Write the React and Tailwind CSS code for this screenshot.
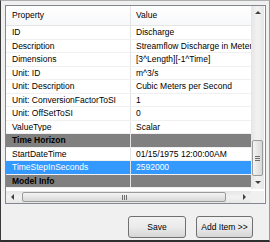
const rows = [
  { k: "ID", v: "Discharge" },
  { k: "Description", v: "Streamflow Discharge in Meters per Second" },
  { k: "Dimensions", v: "[3^Length][-1^Time]" },
  { k: "Unit: ID", v: "m^3/s" },
  { k: "Unit: Description", v: "Cubic Meters per Second" },
  { k: "Unit: ConversionFactorToSI", v: "1" },
  { k: "Unit: OffSetToSI", v: "0" },
  { k: "ValueType", v: "Scalar" },
  { k: "Time Horizon", cat: true },
  { k: "StartDateTime", v: "01/15/1975 12:00:00AM" },
  { k: "TimeStepInSeconds", v: "2592000", sel: true },
  { k: "Model Info", cat: true },
];

function Row({ row }) {
  let bg = "bg-white text-black";
  if (row.cat) bg = "bg-[#808080] text-black font-bold";
  if (row.sel) bg = "bg-[#3399ff] text-white";
  return (
    <div className={`flex h-[13.5px] items-center border-b border-[#f0f0f0] ${bg}`}>
      <div className="w-[124px] shrink-0 truncate pl-[6px] leading-none">{row.k}</div>
      <div className="h-full w-px shrink-0 bg-[#e3e3e3]" />
      <div className="whitespace-nowrap pl-[5px] leading-none">{row.v}</div>
    </div>
  );
}

function Arrow({ dir }) {
  const pts = {
    up: "1,4 4,1 7,4",
    down: "1,1 4,4 7,1",
    left: "4,1 1,4 4,7",
    right: "1,1 4,4 1,7",
  }[dir];
  const vert = dir === "up" || dir === "down";
  return (
    <svg width={vert ? 8 : 5} height={vert ? 5 : 8} viewBox={vert ? "0 0 8 5" : "0 0 5 8"}>
      <polygon points={pts} fill="#404040" />
    </svg>
  );
}

export default function App() {
  return (
    <div
      className="flex h-[242px] w-[270px] flex-col border-l border-r border-b-2 border-t border-l-[#3a3a3a] border-r-[#9a9a9a] border-b-[#2e2e2e] border-t-[#b0b0b0] bg-[#f0f0f0] pl-[4px] pt-[4px] text-[8.5px] text-black"
      style={{ fontFamily: "'Liberation Sans', Arial, sans-serif" }}
    >
      <div className="flex h-[199px] w-[261px] flex-col border border-[#828790] bg-white">
        <div className="flex h-[183px]">
          <div className="flex w-[245px] flex-col overflow-hidden">
            <div className="flex h-[20px] shrink-0 items-center border-b border-[#e5e5e5] bg-gradient-to-b from-white to-[#f7f8fa]">
              <div className="w-[124px] shrink-0 pl-[6px]">Property</div>
              <div className="h-full w-px shrink-0 bg-[#e3e3e3]" />
              <div className="pl-[5px]">Value</div>
            </div>
            {rows.map((r) => (
              <Row key={r.k} row={r} />
            ))}
          </div>
          <div className="flex w-[13px] flex-col bg-gradient-to-r from-[#e6e6e6] via-[#f2f2f2] to-[#e6e6e6]">
            <div className="flex h-[13px] items-center justify-center">
              <Arrow dir="up" />
            </div>
            <div className="flex-1" />
            <div className="mx-[1px] flex h-[36px] flex-col items-center justify-center gap-[1px] rounded-[2px] border border-[#9a9a9a] bg-gradient-to-r from-[#f4f4f4] to-[#d8d8d8]">
              <div className="h-px w-[5px] bg-[#6d6d6d]" />
              <div className="h-px w-[5px] bg-[#6d6d6d]" />
              <div className="h-px w-[5px] bg-[#6d6d6d]" />
            </div>
            <div className="flex h-[13px] items-center justify-center">
              <Arrow dir="down" />
            </div>
          </div>
        </div>
        <div className="flex h-[2px]" />
        <div className="flex h-[12px] items-stretch">
          <div className="flex w-[245px] items-stretch bg-gradient-to-b from-[#e6e6e6] via-[#f2f2f2] to-[#e6e6e6]">
            <div className="flex w-[13px] items-center justify-center">
              <Arrow dir="left" />
            </div>
            <div className="my-[1px] ml-[3px] flex w-[204px] items-center justify-center gap-[1px] rounded-[2px] border border-[#9a9a9a] bg-gradient-to-b from-[#f4f4f4] to-[#d8d8d8]">
              <div className="h-[5px] w-px bg-[#6d6d6d]" />
              <div className="h-[5px] w-px bg-[#6d6d6d]" />
              <div className="h-[5px] w-px bg-[#6d6d6d]" />
            </div>
            <div className="flex-1" />
            <div className="flex w-[13px] items-center justify-center">
              <Arrow dir="right" />
            </div>
          </div>
          <div className="w-[13px] bg-[#f0f0f0]" />
        </div>
      </div>
      <div className="mt-[12px] flex justify-end gap-[10px] pr-[16px]">
        <button className="h-[22px] w-[58px] rounded-[3px] border border-[#707070] bg-gradient-to-b from-[#f2f2f2] via-[#ebebeb] to-[#d6d6d6] text-[8.5px] text-black">
          Save
        </button>
        <button className="h-[22px] w-[57px] rounded-[3px] border border-[#707070] bg-gradient-to-b from-[#f2f2f2] via-[#ebebeb] to-[#d6d6d6] text-[8.5px] text-black">
          Add Item &gt;&gt;
        </button>
      </div>
    </div>
  );
}
